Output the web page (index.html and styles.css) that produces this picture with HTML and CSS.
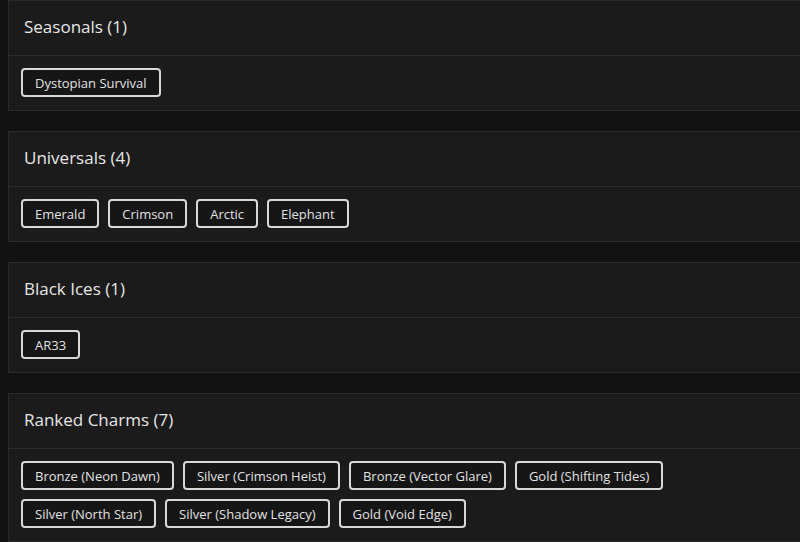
FILE: index.html
```html
<!DOCTYPE html>
<html lang="en">
<head>
<meta charset="utf-8">
<link rel="stylesheet" href="styles.css">
</head>
<body>
<div class="list">
  <section class="card">
    <div class="card-head"><h2 class="card-title">Seasonals (1)</h2></div>
    <div class="card-body">
      <span class="chip">Dystopian Survival</span>
    </div>
  </section>
  <section class="card">
    <div class="card-head"><h2 class="card-title">Universals (4)</h2></div>
    <div class="card-body">
      <span class="chip">Emerald</span>
      <span class="chip">Crimson</span>
      <span class="chip">Arctic</span>
      <span class="chip">Elephant</span>
    </div>
  </section>
  <section class="card">
    <div class="card-head"><h2 class="card-title">Black Ices (1)</h2></div>
    <div class="card-body">
      <span class="chip">AR33</span>
    </div>
  </section>
  <section class="card">
    <div class="card-head"><h2 class="card-title">Ranked Charms (7)</h2></div>
    <div class="card-body">
      <span class="chip">Bronze (Neon Dawn)</span>
      <span class="chip">Silver (Crimson Heist)</span>
      <span class="chip">Bronze (Vector Glare)</span>
      <span class="chip">Gold (Shifting Tides)</span>
      <span class="chip">Silver (North Star)</span>
      <span class="chip">Silver (Shadow Legacy)</span>
      <span class="chip">Gold (Void Edge)</span>
    </div>
  </section>
</div>
</body>
</html>
```

FILE: styles.css
```css
html, body {
  margin: 0;
  padding: 0;
  background: #121212;
  overflow: hidden;
  height: 542px;
}
body {
  font-family: "Open Sans", "Noto Sans", sans-serif;
  color: #e4e4e4;
}
.list {
  display: flex;
  flex-direction: column;
  gap: 20px;
  width: 800px;
  margin: 0 0 0 8px;
}
.card {
  background: #1b1b1b;
  border: 1px solid #2a2a2a;
}
.card-head {
  height: 55px;
  box-sizing: border-box;
  display: flex;
  align-items: center;
  padding: 0 15px 3px;
  border-bottom: 1px solid #2c2c2c;
}
.card-title {
  margin: 0;
  font-size: 17px;
  font-weight: 500;
  color: #e6e6e6;
}
.card-body {
  display: flex;
  flex-wrap: wrap;
  gap: 9px 9px;
  padding: 12px 12px 13px;
  width: 700px;
}
.chip {
  display: inline-flex;
  align-items: center;
  height: 25px;
  padding: 0 12px;
  border: 2px solid #d8d8d8;
  border-radius: 4px;
  background: #161616;
  font-size: 13px;
  color: #e2e2e2;
  white-space: nowrap;
}
```
